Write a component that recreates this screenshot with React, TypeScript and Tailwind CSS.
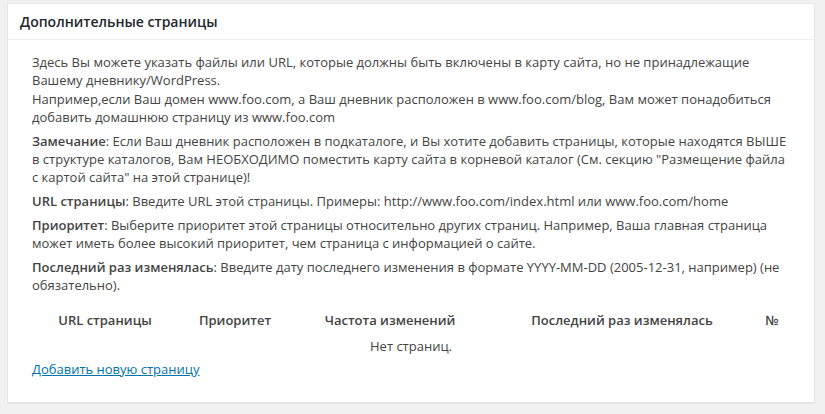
import React from "react";

export default function App() {
  const font = { fontFamily: '"Open Sans", "Noto Sans", sans-serif' };
  return (
    <div className="w-[825px] h-[414px] bg-[#f1f1f1] pt-[3px] pl-[7px]" style={font}>
      <div className="w-[808px] h-[400px] bg-white border border-[#e5e5e5] shadow-[0_1px_1px_rgba(0,0,0,0.04)]">
        <div className="h-[36px] border-b border-[#eeeeee] px-[12px] flex items-center">
          <h2 className="text-[14px] font-semibold text-[#23282d] leading-[19.6px]">Дополнительные страницы</h2>
        </div>
        <div className="px-[24px] pt-[13px] text-[13px] text-[#444] leading-[18.3px]">
          <p>
            Здесь Вы можете указать файлы или URL, которые должны быть включены в карту сайта, но не принадлежащие Вашему дневнику/WordPress.
            <br />
            Например,если Ваш домен www.foo.com, а Ваш дневник расположен в www.foo.com/blog, Вам может понадобиться добавить домашнюю страницу из www.foo.com
          </p>
          <p className="mt-[5.4px]">
            <b className="font-semibold">Замечание</b>: Если Ваш дневник расположен в подкаталоге, и Вы хотите добавить страницы, которые находятся ВЫШЕ в структуре каталогов, Вам НЕОБХОДИМО поместить карту сайта в корневой каталог (См. секцию "Размещение файла с картой сайта" на этой странице)!
          </p>
          <p className="mt-[5.4px]">
            <b className="font-semibold">URL страницы</b>: Введите URL этой страницы. Примеры: http://www.foo.com/index.html или www.foo.com/home
          </p>
          <p className="mt-[5.4px]">
            <b className="font-semibold">Приоритет</b>: Выберите приоритет этой страницы относительно других страниц. Например, Ваша главная страница может иметь более высокий приоритет, чем страница с информацией о сайте.
          </p>
          <p className="mt-[5.4px]">
            <b className="font-semibold">Последний раз изменялась</b>: Введите дату последнего изменения в формате YYYY-MM-DD (2005-12-31, например) (не обязательно).
          </p>
          <table className="mt-[12.5px] border-collapse w-[756px] table-fixed">
            <thead>
              <tr className="h-[27px]">
                <th className="w-[146px] font-semibold text-center p-0">URL страницы</th>
                <th className="w-[114px] font-semibold text-center p-0">Приоритет</th>
                <th className="w-[196px] font-semibold text-center p-0">Частота изменений</th>
                <th className="w-[268px] font-semibold text-center p-0">Последний раз изменялась</th>
                <th className="w-[32px] font-semibold text-center p-0">№</th>
              </tr>
            </thead>
            <tbody>
              <tr className="h-[26px]">
                <td colSpan={5} className="text-center p-0 pl-[2px]">Нет страниц.</td>
              </tr>
            </tbody>
          </table>
          <a href="#" className="text-[#0073aa] underline">Добавить новую страницу</a>
        </div>
      </div>
    </div>
  );
}
